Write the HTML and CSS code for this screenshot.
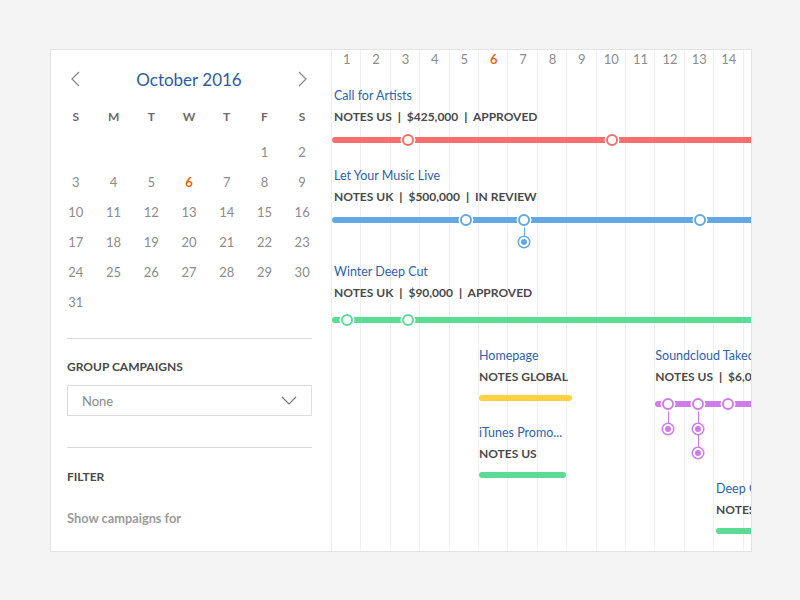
FILE: index.html
```html
<!DOCTYPE html>
<html lang="en">
<head>
    <meta charset="UTF-8">
    <meta name="viewport" content="width=device-width, initial-scale=1.0">
    <title>Campaign calendar</title>
    <link rel="stylesheet" href="styles.css">
</head>
<body>
    <div class="board">
        <aside class="sidebar">
            <div class="calendar">
                <div class="cal-head">
                    <button class="cal-nav" aria-label="Previous month">
                        <svg width="9" height="16" viewBox="0 0 9 16"><polyline points="8,1 1,8 8,15" fill="none" stroke="#8a8a8a" stroke-width="1.3"/></svg>
                    </button>
                    <h2 class="cal-title">October 2016</h2>
                    <button class="cal-nav" aria-label="Next month">
                        <svg width="9" height="16" viewBox="0 0 9 16"><polyline points="1,1 8,8 1,15" fill="none" stroke="#8a8a8a" stroke-width="1.3"/></svg>
                    </button>
                </div>
                <div class="cal-grid cal-weekdays">
                    <span>S</span><span>M</span><span>T</span><span>W</span><span>T</span><span>F</span><span>S</span>
                </div>
                <div class="cal-grid cal-days">
                    <span></span><span></span><span></span><span></span><span></span><span>1</span><span>2</span>
                    <span>3</span><span>4</span><span>5</span><span class="today">6</span><span>7</span><span>8</span><span>9</span>
                    <span>10</span><span>11</span><span>12</span><span>13</span><span>14</span><span>15</span><span>16</span>
                    <span>17</span><span>18</span><span>19</span><span>20</span><span>21</span><span>22</span><span>23</span>
                    <span>24</span><span>25</span><span>26</span><span>27</span><span>28</span><span>29</span><span>30</span>
                    <span>31</span>
                </div>
            </div>

            <div class="panel-section">
                <h3 class="panel-title">GROUP CAMPAIGNS</h3>
                <div class="select">
                    <span>None</span>
                    <svg width="16" height="9" viewBox="0 0 16 9"><polyline points="1,1 8,8 15,1" fill="none" stroke="#7a7a7a" stroke-width="1.2"/></svg>
                </div>
            </div>

            <div class="panel-section panel-section--filter">
                <h3 class="panel-title">FILTER</h3>
                <p class="panel-text">Show campaigns for</p>
            </div>
        </aside>

        <section class="timeline">
            <div class="days">
                <span>1</span><span>2</span><span>3</span><span>4</span><span>5</span><span class="today">6</span><span>7</span>
                <span>8</span><span>9</span><span>10</span><span>11</span><span>12</span><span>13</span><span>14</span>
            </div>

            <!-- campagnes sur toute la largeur -->
            <div class="campaign campaign--full">
                <div class="campaign-title">Call for Artists</div>
                <div class="campaign-meta">NOTES US <b>|</b> $425,000 <b>|</b> APPROVED</div>
                <div class="track track--red">
                    <span class="pin" style="left:76px"></span>
                    <span class="pin" style="left:280px"></span>
                </div>
            </div>

            <div class="campaign campaign--full campaign--drops">
                <div class="campaign-title">Let Your Music Live</div>
                <div class="campaign-meta">NOTES UK <b>|</b> $500,000 <b>|</b> IN REVIEW</div>
                <div class="track track--blue">
                    <span class="drop" style="left:192px"><span class="sub"></span></span>
                    <span class="pin" style="left:134px"></span>
                    <span class="pin" style="left:192px"></span>
                    <span class="pin" style="left:368px"></span>
                </div>
            </div>

            <div class="campaign campaign--full">
                <div class="campaign-title">Winter Deep Cut</div>
                <div class="campaign-meta">NOTES UK <b>|</b> $90,000 <b>|</b> APPROVED</div>
                <div class="track track--green track--low">
                    <span class="pin" style="left:15px"></span>
                    <span class="pin" style="left:76px"></span>
                </div>
            </div>

            <!-- campagnes courtes, placées par jour -->
            <div class="lanes">
                <div class="lane" style="--day:6">
                    <div class="campaign">
                        <div class="campaign-title">Homepage</div>
                        <div class="campaign-meta">NOTES GLOBAL</div>
                        <div class="track track--yellow track--tight" style="width:93px"></div>
                    </div>
                    <div class="campaign campaign--next">
                        <div class="campaign-title">iTunes Promo...</div>
                        <div class="campaign-meta">NOTES US</div>
                        <div class="track track--green track--tight" style="width:87px"></div>
                    </div>
                </div>

                <div class="lane" style="--day:12">
                    <div class="campaign">
                        <div class="campaign-title">Soundcloud Takedown</div>
                        <div class="campaign-meta">NOTES US <b>|</b> $6,000 <b>|</b> APPROVED</div>
                        <div class="track track--purple track--low" style="width:140px">
                            <span class="drop" style="left:13px"><span class="sub"></span></span>
                            <span class="drop" style="left:43px"><span class="sub"></span><span class="sub"></span></span>
                            <span class="pin" style="left:13px"></span>
                            <span class="pin" style="left:43px"></span>
                            <span class="pin" style="left:73px"></span>
                        </div>
                    </div>
                    <div class="campaign campaign--after-drops" style="--shift:2">
                        <div class="campaign-title">Deep Cuts Playlist</div>
                        <div class="campaign-meta">NOTES US <b>|</b> $12,000</div>
                        <div class="track track--green track--tight" style="width:80px"></div>
                    </div>
                </div>
            </div>
        </section>
    </div>
</body>
</html>
```

FILE: styles.css
```css
/* page */
body {
    margin: 0;
    background: #f4f4f4;
    font-family: Lato, "Open Sans", sans-serif;
    color: #4a4a4a;
}

.board {
    display: flex;
    width: 700px;
    height: 501px;
    margin: 49px 0 0 50px;
    background: #fff;
    border: 1px solid #e3e3e3;
    overflow: hidden;
}

/* colonne de gauche */
.sidebar {
    width: 280px;
    flex: none;
    border-right: 1px solid #ececec;
}

.calendar {
    padding: 14px 10px 0 6px;
}

.cal-head {
    display: flex;
    align-items: center;
    justify-content: space-between;
    height: 30px;
}

.cal-nav {
    width: 37.7px;
    display: flex;
    justify-content: center;
    background: none;
    border: 0;
    padding: 0;
    cursor: pointer;
}

.cal-title {
    margin: 0;
    font-size: 17px;
    font-weight: 400;
    color: #2d5c9e;
}

.cal-grid {
    display: grid;
    grid-template-columns: repeat(7, 1fr);
    text-align: center;
}

.cal-weekdays {
    margin-top: 8px;
    line-height: 30px;
    font-size: 12px;
    font-weight: 700;
    color: #6b6b6b;
}

.cal-days {
    margin-top: 5px;
    grid-auto-rows: 30px;
    line-height: 30px;
    font-size: 13px;
    color: #8c8c8c;
}

.today {
    color: #f26419;
    font-weight: 700;
}

.panel-section {
    margin: 21px 19px 0 16px;
    border-top: 1px solid #dadada;
}

.panel-section--filter {
    margin-top: 31px;
}

.panel-title {
    margin: 19px 0 0;
    font-size: 12px;
    line-height: 18px;
    font-weight: 700;
    color: #4a4a4a;
}

.panel-section--filter .panel-title {
    margin-top: 20px;
}

.select {
    margin-top: 9px;
    height: 31px;
    box-sizing: border-box;
    border: 1px solid #dcdcdc;
    display: flex;
    align-items: center;
    justify-content: space-between;
    padding: 0 14px 0 14px;
    font-size: 13px;
    color: #8a8a8a;
}

.panel-text {
    margin: 23px 0 0;
    font-size: 12.8px;
    line-height: 18px;
    font-weight: 700;
    color: #9b9b9b;
}

/* frise */
.timeline {
    flex: 1;
    position: relative;
    overflow: hidden;
    background-image: repeating-linear-gradient(to right, transparent 0 28.4px, #f0f0f0 28.4px 29.4px);
}

.days {
    display: flex;
    height: 18px;
    line-height: 18px;
    font-size: 13px;
    color: #8c8c8c;
}

.days span {
    width: 29.4px;
    flex: none;
    text-align: center;
}

.campaign {
    margin-top: 23px;
}

.days + .campaign {
    margin-top: 18px;
}

.campaign--full .campaign-title,
.campaign--full .campaign-meta {
    padding-left: 2px;
}

.campaign--drops {
    padding-bottom: 16px;
}

.campaign-title {
    font-size: 12.5px;
    line-height: 20px;
    color: #2f62a8;
    white-space: nowrap;
}

.campaign-meta {
    margin-top: 1px;
    font-size: 12px;
    line-height: 20px;
    font-weight: 700;
    color: #4a4a4a;
    white-space: nowrap;
}

.campaign-meta b {
    margin: 0 3px;
}

.track {
    position: relative;
    margin-top: 10px;
    height: 6px;
    width: calc(100% + 10px);
    border-radius: 3px;
    background: var(--c);
}

.track--low { margin-top: 14px; }
.track--tight { margin-top: 8px; }

.track--red { --c: #fa6d6d; }
.track--blue { --c: #62a8e5; }
.track--green { --c: #5cdb95; }
.track--yellow { --c: #fdd23e; }
.track--purple { --c: #cf7be9; }

.pin {
    position: absolute;
    top: 50%;
    width: 12px;
    height: 12px;
    box-sizing: border-box;
    border: 2px solid var(--c);
    border-radius: 50%;
    background: #fff;
    box-shadow: 0 0 0 1.5px #fff;
    transform: translate(-50%, -50%);
}

.drop {
    position: absolute;
    top: 3px;
    display: flex;
    flex-direction: column;
    align-items: center;
    transform: translateX(-50%);
}

.drop::before {
    content: "";
    position: absolute;
    left: 50%;
    top: 0;
    bottom: 5px;
    width: 1px;
    margin-left: -0.5px;
    background: var(--c);
}

.sub {
    position: relative;
    margin-top: 17px;
    width: 10px;
    height: 10px;
    box-sizing: border-box;
    border: 2px solid #fff;
    border-radius: 50%;
    background: var(--c);
    box-shadow: 0 0 0 1.5px var(--c);
}

.track--purple .sub {
    margin-top: 20px;
}

.track--purple .sub + .sub {
    margin-top: 14px;
}

.lanes {
    display: grid;
    grid-template-columns: repeat(15, 29.4px);
    margin-top: 23px;
}

.lane {
    grid-row: 1;
    grid-column: var(--day) / span 4;
    min-width: 0;
}

.lane > .campaign:first-child {
    margin-top: 0;
}

.campaign--next {
    margin-top: 22px;
}

.campaign--after-drops {
    margin-top: 72px;
    margin-left: calc(var(--shift) * 29.4px + 2px);
}
```
